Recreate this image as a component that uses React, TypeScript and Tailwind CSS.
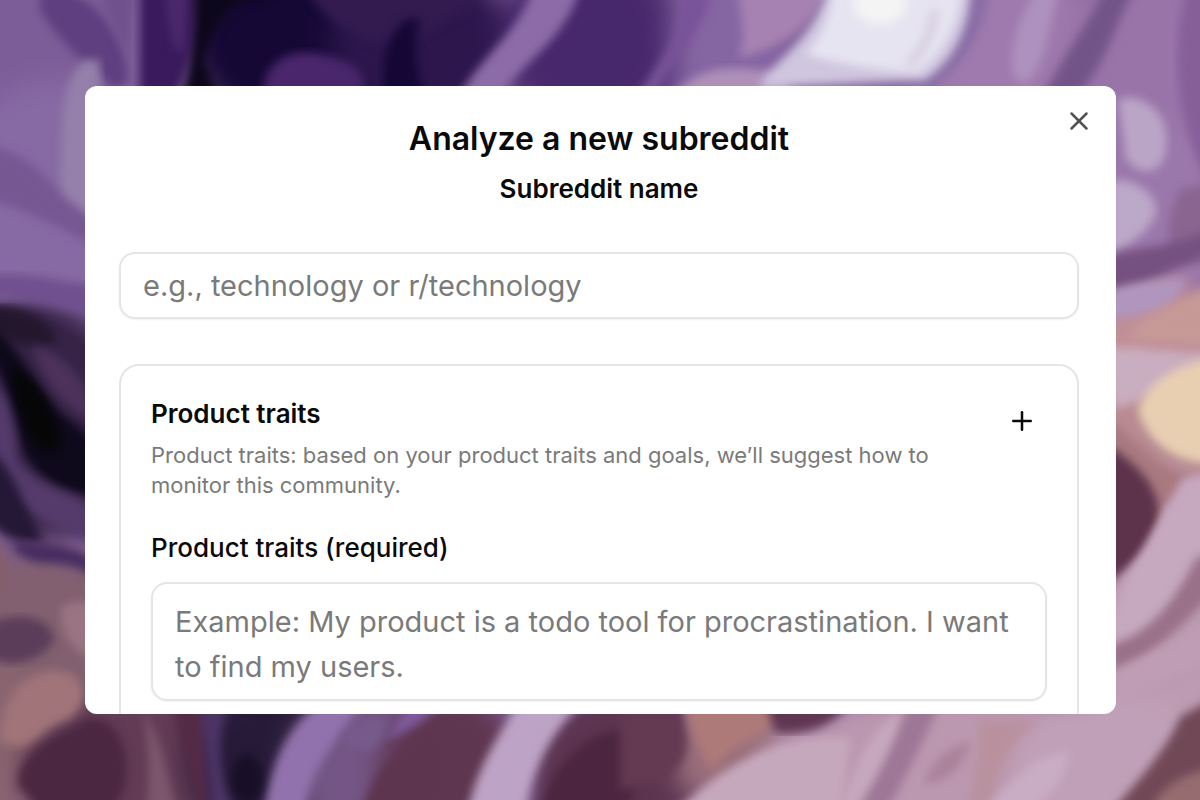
import { Plus, X } from "lucide-react";

type Blob = [cx: number, cy: number, rx: number, ry: number, color: string];
type Flow = [d: string, color: string];

const washes: Blob[] = [
  [60, 30, 150, 90, "#7d5d98"],
  [60, 200, 110, 120, "#876aa4"],
  [300, 40, 110, 90, "#150835"],
  [420, 40, 90, 80, "#2c164c"],
  [590, 40, 90, 90, "#48286c"],
  [730, 40, 60, 90, "#8665a3"],
  [1000, 40, 90, 90, "#9f7aae"],
  [1150, 60, 90, 90, "#9974a9"],
  [1160, 210, 80, 90, "#9b78ac"],
  [1160, 370, 80, 90, "#c09098"],
  [1160, 450, 80, 60, "#b98b92"],
  [1160, 620, 80, 150, "#bd9bb2"],
  [40, 420, 90, 120, "#3a264b"],
  [40, 640, 100, 90, "#82606f"],
  [0, 740, 60, 80, "#8a6570"],
  [130, 770, 110, 80, "#623b55"],
  [270, 760, 80, 80, "#271a38"],
  [360, 770, 70, 80, "#745585"],
  [450, 770, 70, 80, "#5f3650"],
  [620, 770, 90, 80, "#5c3450"],
  [730, 750, 60, 60, "#9a6f7c"],
  [960, 770, 200, 80, "#bc98b0"],
  [1110, 770, 100, 80, "#c0a0b8"],
];

const flows: Flow[] = [
  ["M40-20C80 -10 125 20 128 80L116 90C95 70 60 45 40 10Z", "#5f3f80"],
  ["M100-20H134L128 55C118 40 105 15 100-20Z", "#70508d"],
  ["M140-20H198C196 30 192 70 172 100H140Z", "#3a195c"],
  ["M164-20H190L184 50C176 58 168 40 164-20Z", "#4b286c"],
  ["M192-20H290L260 0C225 0 214 30 205 60L220 100H180C196 60 198 20 192-20Z", "#0d071c"],
  ["M300-20H470V10C440 20 430 35 400 45C360 45 320 20 300-20Z", "#331b50"],
  ["M262 100C262 60 290 48 320 54C350 60 372 70 360 100Z", "#4a266c"],
  ["M385 100C376 50 400 10 420 20C410 50 420 80 425 100Z", "#140735"],
  ["M455 110C470 60 520 40 535-20H582C570 40 520 60 492 110Z", "#8d6ba8"],
  ["M630 110C655 60 690 40 680-20H712C712 30 660 70 650 110Z", "#795399"],
  ["M665 110C690 62 735 62 790 76V110Z", "#ae90b8"],
  ["M738-20H830C815 30 780 48 738 58C750 30 735 5 738-20Z", "#a682b2"],
  ["M970-20H990C985 40 960 70 915 100H890C950 60 967 20 970-20Z", "#886da5"],
  ["M1042-20H1065C1045 20 1052 60 1025 84C1000 80 1012 25 1042-20Z", "#ae91be"],
  ["M1110-20H1140C1115 20 1110 60 1075 100H1040C1065 55 1090 20 1110-20Z", "#735489"],
  ["M1190-20H1220V200C1190 160 1160 70 1190-20Z", "#865f99"],
  ["M84 60C58 85 63 130 60 170C58 200 75 220 100 220V60Z", "#9480aa"],
  ["M-20 145C10 145 42 165 60 195L100 225V250C50 220 10 205-20 198Z", "#775792"],
  ["M-20 278C25 268 55 285 100 285V318C60 310 20 292-20 296Z", "#70508f"],
  ["M-20 305C30 300 65 330 100 350V530C50 520 20 480-20 430Z", "#362346"],
  ["M-20 308C20 302 60 325 55 342C30 352 0 335-20 330Z", "#24172d"],
  ["M-20 325C15 330 28 380 57 410L100 445V495C65 495 38 478 24 453C12 415 8 370-20 350Z", "#0e091b"],
  ["M10 365C42 380 60 420 60 445C35 465 20 425 10 365Z", "#060607"],
  ["M33 345C65 355 95 385 92 420C65 410 40 378 33 345Z", "#4d325b"],
  ["M-20 370C6 385 15 420 17 460C40 490 70 490 100 510V545C50 530 5 500-20 480Z", "#543b6b"],
  ["M-20 445C15 460 22 510 44 540C20 548-5 530-20 510Z", "#251736"],
  ["M-20 525C5 535 12 570 0 590H-20Z", "#855e69"],
  ["M15 540C50 545 80 545 100 565V580C55 550 40 575 15 550Z", "#462c60"],
  ["M-20 630C0 612 50 610 54 640C40 665 0 672-20 650Z", "#5b3d5a"],
  ["M60 610C65 600 80 600 100 605V660C76 655 62 640 60 610Z", "#9a7482"],
  ["M0 740C0 690 35 665 65 672C95 680 85 715 62 722C40 728 28 760 0 740Z", "#a07479"],
  ["M18 785C16 748 65 733 90 718C130 718 138 790 110 810H40Z", "#4b2741"],
  ["M142 710C165 740 165 775 180 820H145C150 780 150 745 142 710Z", "#7c576d"],
  ["M168 700H205L209 820C185 785 185 740 168 700Z", "#542b47"],
  ["M200 700H228C215 750 220 785 240 820H212C210 780 202 740 200 700Z", "#4c3465"],
  ["M262 820C271 760 288 725 325 700H364C339 740 309 765 304 820Z", "#9272ac"],
  ["M340 740C365 710 380 720 390 715C380 755 365 760 340 740Z", "#765b8c"],
  ["M358 820C370 780 385 750 435 735C450 750 430 820 430 820Z", "#5d354e"],
  ["M385 740C400 735 430 720 442 700H410Z", "#7e5a9c"],
  ["M466 820C476 760 506 730 518 700H584C549 735 534 765 524 820Z", "#bda3c5"],
  ["M535 820C545 780 575 735 620 730C640 740 640 800 620 820Z", "#4c2640"],
  ["M620 700H682C682 740 700 750 665 780L620 790Z", "#643952"],
  ["M682 695H810C770 735 740 738 711 770C700 745 688 730 682 695Z", "#ae7a79"],
  ["M660 830C705 778 765 732 850 738L840 830Z", "#c6a8bd"],
  ["M765 700H850C835 728 805 735 775 732Z", "#5f3752"],
  ["M840 810C855 765 870 730 900 712C905 740 875 780 865 810Z", "#c6a8be"],
  ["M850 820C882 775 892 745 912 700H941C923 745 903 780 883 820Z", "#9d7796"],
  ["M925 785C925 765 950 745 970 742C965 765 950 780 925 785Z", "#aa839b"],
  ["M965 820C975 780 980 745 980 720H1040C1005 745 990 785 990 820Z", "#b9919e"],
  ["M985 810C1010 780 1040 750 1070 752C1065 785 1040 805 1015 820Z", "#c9adc4"],
  ["M1106 820C1136 780 1161 760 1181 716L1220 696V820Z", "#714856"],
  ["M1145 820C1160 785 1180 775 1220 765V820Z", "#966c70"],
  ["M1118 100C1138 90 1169 112 1166 140C1169 174 1140 180 1126 158Z", "#bba5c7"],
  ["M1110 182C1130 174 1160 195 1156 213C1149 233 1130 244 1110 254Z", "#bca8c8"],
  ["M1180 190L1220 180V260L1180 265C1160 250 1170 210 1180 190Z", "#8a6590"],
  ["M1100 258C1140 245 1170 250 1220 225V250C1175 265 1145 290 1100 295Z", "#755180"],
  ["M1100 293C1145 278 1165 283 1185 278C1180 310 1145 315 1100 320Z", "#b096be"],
  ["M1130 340C1145 305 1180 310 1220 275V345Z", "#c69997"],
  ["M1100 348C1145 345 1175 355 1220 352C1185 385 1140 404 1114 408Z", "#c9adc0"],
  ["M1138 410C1148 376 1185 364 1220 355V464C1175 464 1148 444 1138 410Z", "#e8cfb2"],
  ["M1100 415C1130 430 1150 465 1190 475C1180 500 1160 505 1150 535L1100 490Z", "#a97980"],
  ["M1090 435C1147 465 1169 500 1154 532C1149 560 1115 570 1090 605Z", "#5d324b"],
  ["M1106 654C1111 580 1161 530 1181 480L1220 470V545C1190 580 1180 614 1106 654Z", "#c6a8bf"],
  ["M1110 645C1155 635 1180 590 1195 560L1220 545V590C1190 610 1170 650 1110 670Z", "#997189"],
  ["M1110 680C1145 655 1175 650 1220 615V655C1185 670 1150 685 1110 705Z", "#bf9db4"],
];

function Swirls() {
  return (
    <svg
      aria-hidden="true"
      viewBox="0 0 1200 800"
      preserveAspectRatio="xMidYMid slice"
      className="absolute inset-0 h-full w-full"
    >
      <defs>
        <filter id="wash" x="-30%" y="-30%" width="160%" height="160%" colorInterpolationFilters="sRGB">
          <feGaussianBlur stdDeviation="14" />
        </filter>
        <filter id="soft" x="-10%" y="-10%" width="120%" height="120%" colorInterpolationFilters="sRGB">
          <feGaussianBlur stdDeviation="5" />
        </filter>
      </defs>
      <rect width="1200" height="800" fill="#80609a" />
      <g filter="url(#wash)">
        {washes.map(([cx, cy, rx, ry, color]) => (
          <ellipse key={`${cx}-${cy}`} cx={cx} cy={cy} rx={rx} ry={ry} fill={color} />
        ))}
      </g>
      {flows.map(([d, color]) => (
        <path key={d} d={d} fill={color} filter="url(#soft)" />
      ))}
      <g filter="url(#soft)">
        <ellipse cx="247" cy="779" rx="15" ry="25" fill="#180f27" />
        <path d="M830-20H970C972 20 958 58 925 80L760 88C765 65 815 45 830-20Z" fill="#cfc6df" />
      </g>
      <g filter="url(#soft)">
        <path d="M835-20H962C962 20 945 52 918 73C880 70 840 65 805 54C822 38 831 15 835-20Z" fill="#e7e4f1" />
        <path d="M935 10C932 35 922 52 908 66" fill="none" stroke="#d6cee0" strokeWidth="9" />
        <ellipse cx="880" cy="4" rx="26" ry="20" fill="#f4f4f5" />
      </g>
    </svg>
  );
}

export default function App() {
  return (
    <div className="relative isolate flex h-screen overflow-hidden py-[86px] pr-[84px] pl-[85px] font-['Inter','Liberation_Sans',sans-serif] text-neutral-950">
      <Swirls />
      <main
        role="dialog"
        aria-labelledby="dialog-title"
        className="relative min-w-0 flex-1 overflow-hidden rounded-xl bg-white pt-8 pr-[37px] pl-[34px]"
      >
        <button type="button" aria-label="Close" className="absolute top-5 right-[22px] p-0 text-neutral-600">
          <X size={30} strokeWidth={2} />
        </button>
        <header className="text-center">
          <h1 id="dialog-title" className="text-[32px] leading-[42px] font-semibold">
            Analyze a new subreddit
          </h1>
          <label htmlFor="subreddit" className="mt-3 block text-[26px] leading-[34px] font-semibold">
            Subreddit name
          </label>
        </header>
        <input
          id="subreddit"
          type="text"
          placeholder="e.g., technology or r/technology"
          className="mt-[46px] block h-[67px] w-full rounded-2xl border-2 border-neutral-200 px-[22px] text-[29px] shadow-xs outline-none placeholder:text-[#7a7a7a]"
        />
        <section className="mt-[45px] rounded-[20px] border-2 border-neutral-200 p-[30px]">
          <div className="flex items-start justify-between">
            <div className="min-w-0">
              <h2 className="text-[26px] leading-9 font-semibold">Product traits</h2>
              <p className="mt-2 max-w-[820px] text-[22px] leading-[30px] text-[#7a7a7a]">
                Product traits: based on your product traits and goals, we’ll suggest how to monitor this community.
              </p>
            </div>
            <button type="button" aria-label="Add product trait" className="mt-[10px] mr-[10px] shrink-0">
              <Plus size={30} strokeWidth={2} />
            </button>
          </div>
          <label htmlFor="traits" className="mt-[30px] block text-[26px] leading-9 font-medium">
            Product traits (required)
          </label>
          <textarea
            id="traits"
            rows={2}
            placeholder="Example: My product is a todo tool for procrastination. I want to find my users."
            className="mt-4 block h-[119px] w-full resize-none overflow-hidden rounded-2xl border-2 border-neutral-200 px-[22px] pt-[15px] pb-4 text-[29px] leading-[45px] shadow-xs outline-none placeholder:text-[#7a7a7a]"
          />
        </section>
      </main>
    </div>
  );
}
